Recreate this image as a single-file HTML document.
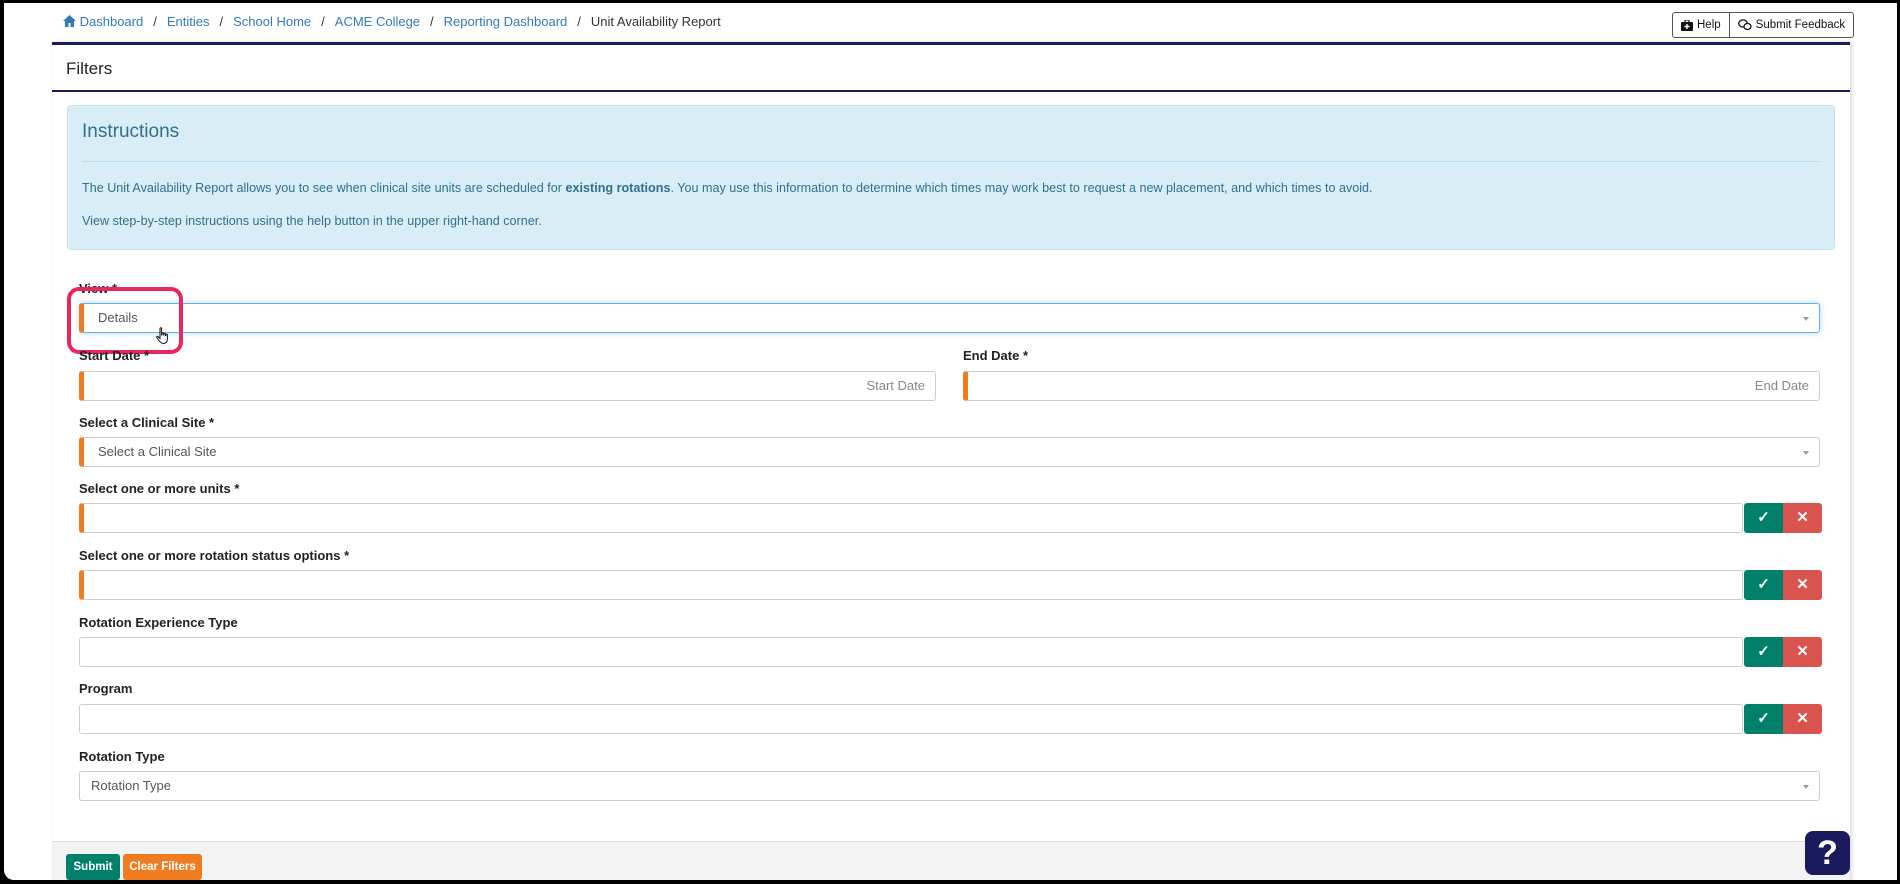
<!DOCTYPE html>
<html><head><meta charset="utf-8"><style>
*{box-sizing:border-box;margin:0;padding:0}
body{width:1900px;height:884px;overflow:hidden;background:#000;font-family:"Liberation Sans",sans-serif;position:relative}
#page{position:absolute;left:4px;top:3px;width:1893px;height:877px;background:#fff;border-bottom-left-radius:10px;overflow:hidden}
.bc{position:absolute;top:11px;left:59px;font-size:13px;color:#337ab7;white-space:nowrap}
.bc span.s{color:#333;margin:0 10px}
.bc .cur{color:#333}
.tb{position:absolute;left:1668px;top:9px;height:26px;border:1px solid #555;border-radius:3px;display:flex;font-size:11.5px;color:#111;background:#fff}
.tb div{padding:0 8px;line-height:24px;display:flex;align-items:center;gap:4px}
.tb div+div{border-left:1px solid #555}
.card{position:absolute;left:48px;top:39px;width:1798px;height:860px;border-top:3px solid #1a1a5e;box-shadow:2px 0 4px rgba(0,0,0,.15);background:#fff}
.card .hd{height:47px;border-bottom:2px solid #1a1a5e;font-size:17px;color:#222;padding:14px 0 0 14px}
.w{position:absolute;left:0;top:-4px;width:100%;height:100%}
.inst{position:absolute;left:15px;top:64px;width:1768px;height:145px;background:#d9edf7;border:1px solid #bce8f1;border-radius:4px;color:#31708f;padding:0 14px}
.inst h3{font-weight:normal;font-size:19px;padding-top:15px;height:56px;border-bottom:1px solid #b3dfee}
.inst p{font-size:12.6px;margin-top:19px}
.lab{position:absolute;left:27px;font-size:13px;font-weight:bold;color:#222}
.in{position:absolute;left:27px;width:1741px;height:30px;border:1px solid #ccc;border-radius:3px;background:#fff;font-size:13px;color:#555;padding-left:14px;line-height:28px}
.req{border-left:5px solid #f07c22}
.arr{position:absolute;right:10px;top:13px;border:3px solid transparent;border-top:4px solid #999}
.ph{position:absolute;right:10px;color:#888;top:0}
.b{position:absolute;width:39px;height:30px;color:#fff;text-align:center;line-height:30px;font-size:15px;font-weight:bold}
.g{background:#00806a;border-radius:3px 0 0 3px}
.r{background:#d9534f;border-radius:0 3px 3px 0}
.ft{position:absolute;left:0;top:800px;width:100%;height:60px;background:#f3f3f3;border-top:1px solid #ddd}
.btn{position:absolute;top:12px;height:26px;color:#fff;font-size:11.5px;font-weight:bold;line-height:26px;text-align:center;border-radius:3px}
</style></head><body><div id="page">
<div class="bc"><svg width="13" height="12" viewBox="0 0 13 12" style="vertical-align:-1px"><path d="M6.5 0L0 6h2v6h3.5V8h2v4H11V6h2z" fill="#337ab7"/></svg> Dashboard<span class="s">/</span>Entities<span class="s">/</span>School Home<span class="s">/</span>ACME College<span class="s">/</span>Reporting Dashboard<span class="s">/</span><span class="cur">Unit Availability Report</span></div>
<div class="tb"><div><svg width="12" height="11" viewBox="0 0 12 11"><rect x="0" y="2" width="12" height="9" rx="1" fill="#111"/><rect x="4" y="0" width="4" height="3" fill="none" stroke="#111" stroke-width="1.2"/><path d="M6 4v5M3.5 6.5h5" stroke="#fff" stroke-width="1.4"/></svg>Help</div><div><svg width="14" height="12" viewBox="0 0 14 12"><ellipse cx="5" cy="4.5" rx="4.3" ry="3.6" fill="none" stroke="#111" stroke-width="1.3"/><ellipse cx="9.5" cy="7.5" rx="3.5" ry="3" fill="#fff" stroke="#111" stroke-width="1.3"/></svg>Submit Feedback</div></div>
<div class="card">
<div class="hd">Filters</div>
<div class="w">
<div class="inst"><h3>Instructions</h3>
<p>The Unit Availability Report allows you to see when clinical site units are scheduled for <b>existing rotations</b>. You may use this information to determine which times may work best to request a new placement, and which times to avoid.</p>
<p>View step-by-step instructions using the help button in the upper right-hand corner.</p></div>

<div class="lab" style="top:240px">View *</div>
<div class="in req" style="top:262px;border-color:#66afe9;border-left-color:#f07c22;box-shadow:0 0 6px rgba(102,175,233,.5)">Details<span class="arr"></span></div>
<div style="position:absolute;left:15px;top:246px;width:116px;height:67px;border:4px solid #e8285d;border-radius:12px"></div>
<svg style="position:absolute;left:104px;top:286px" width="14" height="18" viewBox="0 0 14 18"><path d="M4 1.5c0-1 1.6-1 1.6 0V8h.4V6.5c0-1 1.6-1 1.6 0V8h.3V7.2c0-1 1.6-1 1.6 0V8.5h.3v-.6c0-1 1.6-1 1.6 0V12c0 2.5-1.5 4.5-4 4.5H7.5C5.5 16.5 4 15 2.5 13L.8 10.5c-.6-.9.6-1.700 1.3-.9L4 11.5z" fill="#fff" stroke="#111" stroke-width="1"/></svg>

<div class="lab" style="top:307px">Start Date *</div>
<div class="in req" style="top:330px;width:857px"><span class="ph">Start Date</span></div>
<div class="lab" style="top:307px;left:911px">End Date *</div>
<div class="in req" style="top:330px;left:911px;width:857px"><span class="ph">End Date</span></div>

<div class="lab" style="top:374px">Select a Clinical Site *</div>
<div class="in req" style="top:396px">Select a Clinical Site<span class="arr"></span></div>

<div class="lab" style="top:440px">Select one or more units *</div>
<div class="in req" style="top:462px;width:1664px"></div>
<div class="b g" style="left:1692px;top:462px">✓</div><div class="b r" style="left:1731px;top:462px">✕</div>

<div class="lab" style="top:507px">Select one or more rotation status options *</div>
<div class="in req" style="top:529px;width:1664px"></div>
<div class="b g" style="left:1692px;top:529px">✓</div><div class="b r" style="left:1731px;top:529px">✕</div>

<div class="lab" style="top:574px">Rotation Experience Type</div>
<div class="in" style="top:596px;width:1664px"></div>
<div class="b g" style="left:1692px;top:596px">✓</div><div class="b r" style="left:1731px;top:596px">✕</div>

<div class="lab" style="top:640px">Program</div>
<div class="in" style="top:663px;width:1664px"></div>
<div class="b g" style="left:1692px;top:663px">✓</div><div class="b r" style="left:1731px;top:663px">✕</div>

<div class="lab" style="top:708px">Rotation Type</div>
<div class="in" style="top:730px;padding-left:11px">Rotation Type<span class="arr"></span></div>

<div class="ft">
<div class="btn" style="left:14px;width:54px;background:#00806a">Submit</div>
<div class="btn" style="left:71px;width:79px;background:#f07c22">Clear Filters</div>
</div>
</div>
</div>
<div style="position:absolute;left:1801px;top:828px;width:45px;height:44px;background:#1a1a5e;border-radius:8px;color:#fff;font-size:34px;font-weight:bold;text-align:center;line-height:44px">?</div>
</div></body></html>
